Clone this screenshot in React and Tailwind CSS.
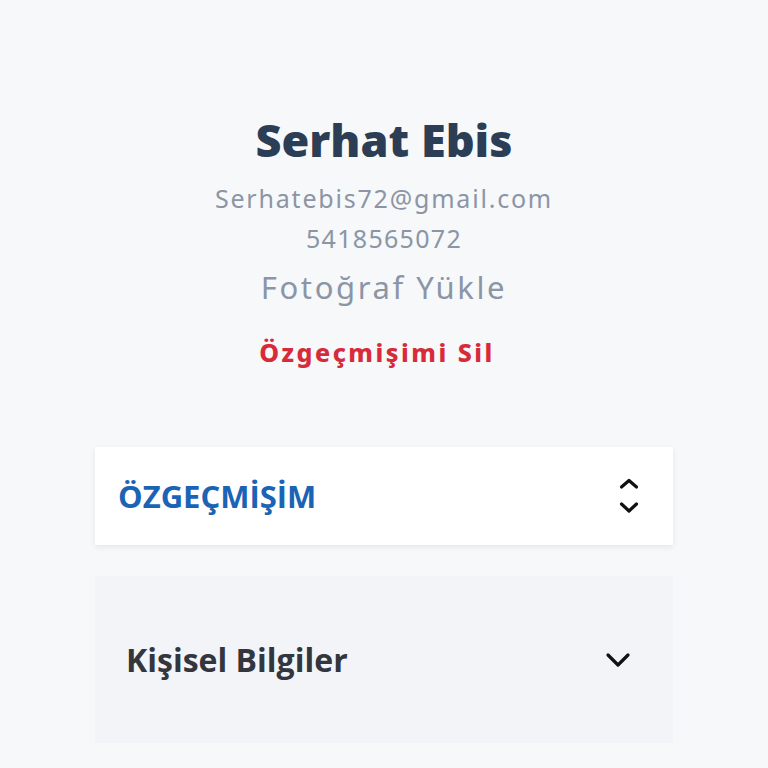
import React from "react";

function UpDown() {
  return (
    <svg width="22" height="38" viewBox="0 0 22 38" fill="none" stroke="#111" strokeWidth="3.2" strokeLinecap="round" strokeLinejoin="round">
      <path d="M3.5 10 L11 3.5 L18.5 10" />
      <path d="M3.5 27 L11 34 L18.5 27" />
    </svg>
  );
}

function Down() {
  return (
    <svg width="26" height="18" viewBox="0 0 26 18" fill="none" stroke="#111" strokeWidth="3.2" strokeLinecap="round" strokeLinejoin="round">
      <path d="M3 4 L13 14 L23 4" />
    </svg>
  );
}

export default function App() {
  return (
    <div className="min-h-[768px] w-full bg-[#f6f8fa] flex flex-col items-center pt-[110px]">
      <div className="flex flex-col items-center" style={{ fontFamily: "'Noto Sans', sans-serif" }}>
        <div className="text-[45px] leading-[60px] font-black text-[#2c3e55]">Serhat Ebis</div>
        <div className="text-[25px] leading-[40px] tracking-[1.8px] text-[#8b95a5] mt-[8px]">Serhatebis72@gmail.com</div>
        <div className="text-[25px] leading-[40px] tracking-[1.3px] text-[#8b95a5]">5418565072</div>
        <div className="text-[31px] leading-[50px] tracking-[2.6px] text-[#8b95a5] mt-[4px]">Fotoğraf Yükle</div>
        <div className="text-[25px] leading-[40px] tracking-[2.5px] font-extrabold text-[#d72b3a] mt-[20px] mr-[14px]">Özgeçmişimi Sil</div>
      </div>
      <div className="w-[578px] mt-[75px] flex flex-col gap-[31px]" style={{ fontFamily: "'Open Sans', 'Noto Sans', sans-serif" }}>
        <div className="h-[98px] bg-white shadow-[0_2px_6px_rgba(0,0,0,0.08)] flex items-center justify-between pl-[23px] pr-[33px]">
          <span className="text-[31px] font-bold text-[#1b63b5]">ÖZGEÇMİŞİM</span>
          <UpDown />
        </div>
        <div className="h-[167px] bg-[#f2f4f8] flex items-center justify-between pl-[31px] pr-[42px]">
          <span className="text-[32px] font-bold text-[#33363d]">Kişisel Bilgiler</span>
          <Down />
        </div>
      </div>
    </div>
  );
}
